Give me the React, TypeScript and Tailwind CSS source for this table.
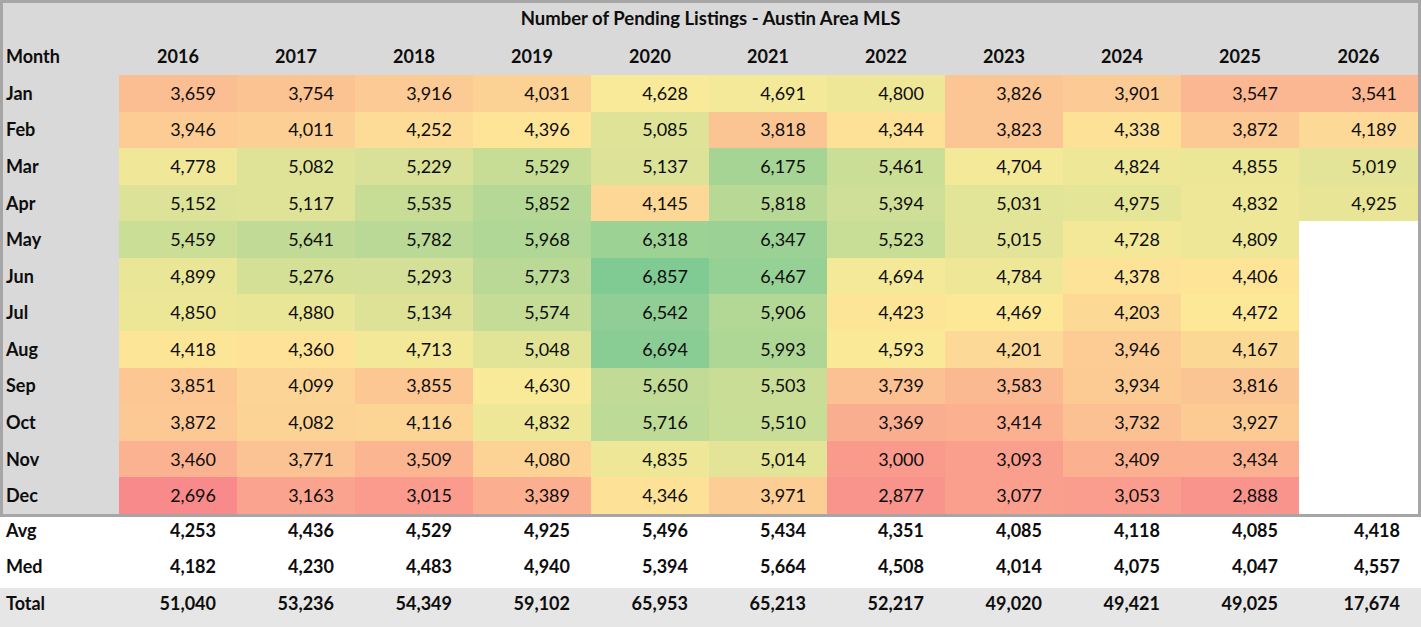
import React from "react";

const years = ["2016", "2017", "2018", "2019", "2020", "2021", "2022", "2023", "2024", "2025", "2026"];
const months = ["Jan", "Feb", "Mar", "Apr", "May", "Jun", "Jul", "Aug", "Sep", "Oct", "Nov", "Dec"];

const data: number[][] = [
  [3659, 3946, 4778, 5152, 5459, 4899, 4850, 4418, 3851, 3872, 3460, 2696],
  [3754, 4011, 5082, 5117, 5641, 5276, 4880, 4360, 4099, 4082, 3771, 3163],
  [3916, 4252, 5229, 5535, 5782, 5293, 5134, 4713, 3855, 4116, 3509, 3015],
  [4031, 4396, 5529, 5852, 5968, 5773, 5574, 5048, 4630, 4832, 4080, 3389],
  [4628, 5085, 5137, 4145, 6318, 6857, 6542, 6694, 5650, 5716, 4835, 4346],
  [4691, 3818, 6175, 5818, 6347, 6467, 5906, 5993, 5503, 5510, 5014, 3971],
  [4800, 4344, 5461, 5394, 5523, 4694, 4423, 4593, 3739, 3369, 3000, 2877],
  [3826, 3823, 4704, 5031, 5015, 4784, 4469, 4201, 3583, 3414, 3093, 3077],
  [3901, 4338, 4824, 4975, 4728, 4378, 4203, 3946, 3934, 3732, 3409, 3053],
  [3547, 3872, 4855, 4832, 4809, 4406, 4472, 4167, 3816, 3927, 3434, 2888],
  [3541, 4189, 5019, 4925],
];

const avg = [4253, 4436, 4529, 4925, 5496, 5434, 4351, 4085, 4118, 4085, 4418];
const med = [4182, 4230, 4483, 4940, 5394, 5664, 4508, 4014, 4075, 4047, 4557];
const tot = [51040, 53236, 54349, 59102, 65953, 65213, 52217, 49020, 49421, 49025, 17674];

const all = data.flat().sort((a, b) => a - b);
const minV = all[0];
const maxV = all[all.length - 1];
const midV = (() => {
  const p = 0.5 * (all.length - 1);
  const lo = Math.floor(p);
  const hi = Math.ceil(p);
  return all[lo] + (all[hi] - all[lo]) * (p - lo);
})();

const cMin = [249, 138, 139];
const cMid = [253, 235, 152];
const cMax = [128, 202, 148];

function colorFor(v: number): string {
  let a: number[], b: number[], t: number;
  if (v <= midV) {
    a = cMin;
    b = cMid;
    t = (v - minV) / (midV - minV);
  } else {
    a = cMid;
    b = cMax;
    t = (v - midV) / (maxV - midV);
  }
  const c = a.map((x, i) => Math.round(x + (b[i] - x) * t));
  return `rgb(${c[0]},${c[1]},${c[2]})`;
}

const fmt = (n: number) => n.toLocaleString("en-US");

export default function App() {
  return (
    <div className="w-[1421px] h-[627px] bg-white text-[18px] text-[#0d0d0d] font-['Lato','Liberation_Sans',sans-serif] overflow-hidden">
      <div className="border-[3px] border-[#a6a6a6] bg-[#d9d9d9]">
        <div className="h-[35px] flex items-center justify-center font-bold text-[18.5px] pb-[3px]">
          Number of Pending Listings - Austin Area MLS
        </div>
        <div className="h-[37px] grid grid-cols-[116px_repeat(10,118px)_1fr] items-center font-bold">
          <div className="pl-[3px]">Month</div>
          {years.map((y) => (
            <div key={y} className="text-center">
              {y}
            </div>
          ))}
        </div>
        <div className="h-[439px] grid grid-cols-[116px_repeat(10,118px)_1fr] grid-rows-[repeat(12,minmax(0,1fr))]">
          {months.map((m, r) => (
            <React.Fragment key={m}>
              <div className="pl-[3px] flex items-center font-bold">{m}</div>
              {years.map((y, c) => {
                const v = data[c][r];
                if (v === undefined) {
                  return <div key={y} className="bg-white" />;
                }
                return (
                  <div
                    key={y}
                    className="flex items-center justify-end pr-[21px]"
                    style={{ backgroundColor: colorFor(v) }}
                  >
                    {fmt(v)}
                  </div>
                );
              })}
            </React.Fragment>
          ))}
        </div>
      </div>
      <div className="h-[31px] pb-[4px] grid grid-cols-[119px_repeat(10,118px)_1fr] items-center font-bold">
        <div className="pl-[6px]">Avg</div>
        {avg.map((v, i) => (
          <div key={i} className="text-right pr-[21px]">
            {fmt(v)}
          </div>
        ))}
      </div>
      <div className="h-[40px] pb-[3px] grid grid-cols-[119px_repeat(10,118px)_1fr] items-center font-bold">
        <div className="pl-[6px]">Med</div>
        {med.map((v, i) => (
          <div key={i} className="text-right pr-[21px]">
            {fmt(v)}
          </div>
        ))}
      </div>
      <div className="h-[39px] pb-[9px] bg-[#e7e6e6] grid grid-cols-[119px_repeat(10,118px)_1fr] items-center font-bold">
        <div className="pl-[6px]">Total</div>
        {tot.map((v, i) => (
          <div key={i} className="text-right pr-[21px]">
            {fmt(v)}
          </div>
        ))}
      </div>
    </div>
  );
}
